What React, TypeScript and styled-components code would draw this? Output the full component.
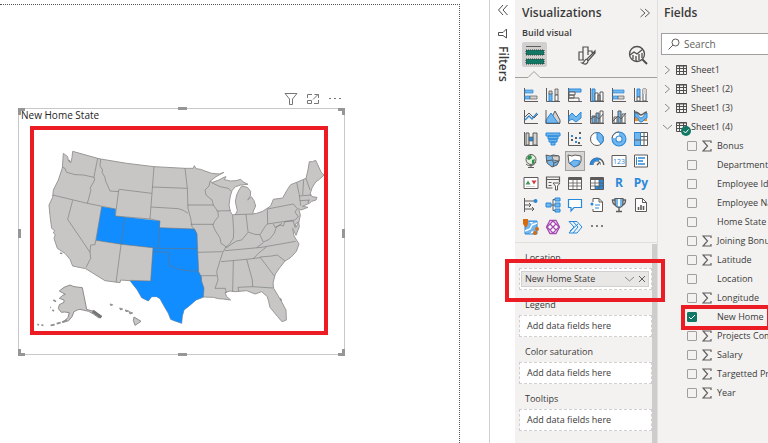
import React from "react";
import styled, { createGlobalStyle, css } from "styled-components";

const GlobalStyle = createGlobalStyle`
  * { box-sizing: border-box; }
  body { margin: 0; background: #fff; color: #3b3a39; font: 9px/14px "Open Sans", "Noto Sans", sans-serif; overflow: hidden; }
  button, input { font: inherit; color: inherit; }
  button { background: none; border: 0; padding: 0; display: inline-flex; align-items: center; justify-content: center; }
  svg { display: block; flex: none; }
`;

const RED = "#ec1c24";

const Shell = styled.div`
  display: grid;
  grid-template-columns: minmax(0, 1fr) 26px 143px 110px;
  min-height: 100vh;
`;

/* ---------- report canvas ---------- */

const Canvas = styled.main`
  padding: 4px 29px 0 0;
  display: flex;
`;

const ReportPage = styled.div`
  flex: 1;
  min-width: 0;
  border-top: 1px dotted #555;
  border-right: 1px dotted #555;
  padding: 87px 114px 0 18px;
`;

const VisualActions = styled.div`
  display: flex;
  justify-content: flex-end;
  align-items: flex-start;
  gap: 8px;
  height: 16px;
  padding-right: 3px;
`;

const VisualFrame = styled.section`
  position: relative;
  border: 1px solid #c8c8c8;
  padding: 0 16px 19px 11px;
`;

const Handle = styled.span<{ $at: "tl" | "t" | "tr" | "l" | "r" | "bl" | "b" | "br" }>`
  position: absolute;
  border: 0 solid #969696;
  ${({ $at }) =>
    ({
      tl: css`top: -1px; left: -1px; width: 7px; height: 7px; border-width: 3px 0 0 3px;`,
      tr: css`top: -1px; right: -1px; width: 7px; height: 7px; border-width: 3px 3px 0 0;`,
      bl: css`bottom: -2px; left: -1px; width: 7px; height: 7px; border-width: 0 0 3px 3px;`,
      br: css`bottom: -2px; right: -1px; width: 7px; height: 7px; border-width: 0 3px 3px 0;`,
      t: css`top: -2px; left: 49%; width: 9px; border-width: 3px 0 0;`,
      b: css`bottom: -2px; left: 49%; width: 9px; border-width: 3px 0 0;`,
      l: css`top: 49%; left: -1px; height: 9px; border-width: 0 0 0 3px;`,
      r: css`top: 49%; right: -1px; height: 9px; border-width: 0 0 0 3px;`,
    })[$at]}
`;

const VisualTitle = styled.h3`
  margin: 0 0 5px -9px;
  font-size: 10px;
  line-height: 12px;
  font-weight: 400;
  color: #252423;
`;

const MapHighlight = styled.div`
  border: 4px solid ${RED};
  svg { width: 100%; height: auto; }
`;

/* ---------- collapsed filters ---------- */

const FiltersPane = styled.aside`
  border-left: 1px solid #d0d0d0;
  display: flex;
  flex-direction: column;
  align-items: center;
  padding: 4px 0 0;
  gap: 12px;
`;

const FiltersLabel = styled.h2`
  margin: -6px 0 0;
  writing-mode: vertical-rl;
  font-size: 12px;
  line-height: 16px;
  font-weight: 600;
`;

/* ---------- visualizations ---------- */

const VizPane = styled.section`
  background: #f3f2f1;
  border-right: 1px solid #e1dfdd;
  display: flex;
  flex-direction: column;
  min-width: 0;
`;

const PaneHeader = styled.header`
  display: flex;
  justify-content: space-between;
  align-items: center;
  padding: 3px 6px 0 7px;
`;

const PaneTitle = styled.h2`
  margin: 0;
  font-size: 12px;
  line-height: 20px;
  font-weight: 600;
`;

const SubTitle = styled.h3`
  margin: 3px 7px 2px;
  font-size: 9px;
  line-height: 14px;
  font-weight: 600;
`;

const ModeTabs = styled.div`
  display: flex;
  justify-content: space-between;
  padding: 0 7px;
`;

const ModeTab = styled.button<{ $active?: boolean }>`
  width: 25px;
  height: 25px;
  border-radius: 2px;
  background: ${({ $active }) => ($active ? "#d2d0ce" : "transparent")};
`;

const TabRule = styled.svg`
  width: 100%;
  height: 12px;
`;

const VisualGrid = styled.div`
  display: grid;
  grid-template-columns: repeat(6, 22px);
  grid-auto-rows: 22px;
  padding: 5px 0 4px 5px;
  border-bottom: 1px solid #e1dfdd;
`;

const VisualButton = styled.button<{ $active?: boolean }>`
  width: 20px;
  height: 20px;
  margin: 1px;
  ${({ $active }) => $active && css`background: #d8d6d4; border: 1px solid #a19f9d;`}
`;

const Wells = styled.div`
  flex: 1;
  display: flex;
  flex-direction: column;
  gap: 8px;
  padding: 7px 0 0 4px;
  margin-top: 1px;
  border-right: 5px solid #cfcdcb;
`;

const Well = styled.div`
  position: relative;
`;

const WellLabel = styled.h4`
  margin: 0 6px 3px;
  font-size: 9px;
  line-height: 14px;
  font-weight: 400;
`;

const DropZone = styled.div<{ $filled?: boolean }>`
  height: 22px;
  border: 1px dashed #d2d0ce;
  background: #fff;
  display: flex;
  align-items: center;
  padding: ${({ $filled }) => ($filled ? "2px 2px 2px 1px" : "0 7px")};
  white-space: nowrap;
`;

const Chip = styled.div`
  flex: 1;
  height: 16px;
  display: flex;
  align-items: center;
  gap: 4px;
  padding: 0 2px 0 3px;
  background: #e9e7e5;
  border: 1px solid #d2d0ce;
  span { flex: 1; }
`;

const WellHighlight = styled.div`
  position: absolute;
  inset: 8px -13px -12px -14px;
  border: 4px solid ${RED};
  pointer-events: none;
  z-index: 2;
`;

/* ---------- fields ---------- */

const FieldsPane = styled.section`
  background: #f3f2f1;
  padding: 3px 0 0 3px;
  min-width: 0;
  overflow: hidden;
`;

const FieldsTitle = styled(PaneTitle)`
  margin: 0 0 10px 3px;
`;

const SearchBox = styled.label`
  display: flex;
  align-items: center;
  gap: 4px;
  height: 22px;
  margin-right: -3px;
  padding-left: 6px;
  background: #fff;
  border: 1px solid #a19f9d;
  input {
    width: 100%;
    min-width: 0;
    border: 0;
    outline: 0;
    padding: 0;
    background: none;
    font-size: 10px;
    &::placeholder { color: #605e5c; opacity: 1; }
  }
`;

const Tree = styled.ul`
  list-style: none;
  margin: 0;
  padding: 5px 0 0;
  & & { padding: 0; }
`;

const TableRow = styled.button`
  height: 19px;
  gap: 4px;
  padding-left: 2px;
  white-space: nowrap;
`;

const TableIconBox = styled.span`
  position: relative;
`;

const Tick = styled.svg`
  position: absolute;
  left: 5px;
  top: 5px;
`;

const FieldRow = styled.li`
  position: relative;
  display: grid;
  grid-template-columns: 10px 10px max-content;
  align-items: center;
  gap: 5px;
  height: 19px;
  padding-left: 26px;
  label { grid-column: 3; white-space: nowrap; }
`;

const CheckBox = styled.input`
  appearance: none;
  width: 10px;
  height: 10px;
  margin: 0;
  border: 1px solid #a19f9d;
  border-radius: 1px;
  background: #f3f2f1;
  &:checked {
    border-color: #117865;
    background: #117865 url("data:image/svg+xml,%3Csvg xmlns='http://www.w3.org/2000/svg' viewBox='0 0 8 8'%3E%3Cpath d='M1 4l2 2 4-4' fill='none' stroke='white'/%3E%3C/svg%3E");
  }
`;

const FieldHighlight = styled.div`
  position: absolute;
  inset: -2px -3px -4px 20px;
  border: 4px solid ${RED};
  pointer-events: none;
  z-index: 1;
`;

/* ---------- drawings ---------- */

const STATE_LINES = [
  "M187 262L194 264L200 277L225 284L250 285L282 292",
  "M293 235L282 290L284 300L270 325L273 330L262 370",
  "M158 345L262 370L347 387",
  "M218 361L203 418L270 517L272 535L258 562",
  "M270 517L272 495L285 494L305 380",
  "M302 237L300 258L308 270L306 277L314 290L317 303L330 333L354 335L358 328L455 340",
  "M356 332L346 408L450 417L480 423L478 443L583 447",
  "M462 260L450 417M457 321L562 325M453 381L535 386L550 391L564 400",
  "M555 265L562 325L564 385L572 415L576 440L587 452",
  "M374 412L348 607M288 481L365 493L475 505L592 506M479 443L474 505",
  "M459 503L452 603L390 601M459 515L506 517L505 555L520 562L538 568L560 572L595 573",
  "M583 447L591 462L593 514L596 575L604 590L605 604L612 625L610 651",
  "M630 304L627 318L615 330L618 345L636 360L640 375L654 395L655 410L643 425L639 436L646 452L660 474L663 490L678 500L668 518L660 542L650 575L654 600L645 625L676 625L679 639",
  "M562 375L640 375M572 433L640 433M635 308L660 320L685 325L693 334M650 393L692 392",
  "M698 405L701 455L700 475L690 490L678 502M738 403L744 455",
  "M705 404L758 402M678 504L695 492L710 483L725 480L745 456L764 463L780 464L793 443L803 430L802 388",
  "M802 387L880 372L892 386L885 396L895 411L884 420L802 432M820 432L825 442L840 435L850 438L855 425L880 423L885 443",
  "M890 307L898 345L902 377M911 300L908 345M918 295L930 330M898 348L935 345M900 362L930 360M925 360L925 370",
  "M780 465L790 486L808 478L822 461L829 442L846 430",
  "M674 512L720 508L785 502L887 484M770 503L790 488",
  "M663 545L740 538L780 533M760 536L775 520L799 501",
  "M780 531L815 528L832 525L855 543M780 531L802 560L823 588",
  "M740 538L757 600L758 620L819 624M700 542L698 635M716 634L714 622L758 620",
  "M593 517L668 515M602 587L650 587",
];

const MAINLAND =
  "M190 220L203 230L205 242L213 248L216 232L218 214L293 235L302 237L380 250L462 260L555 265L580 265L583 257L588 266L602 268L615 273L635 280L658 282L672 277L648 290L630 304L637 307L655 301L672 292L678 290L673 299L692 303L708 302L722 298L730 306L744 313L722 315L706 320L696 332L691 348L687 375L691 395L697 404L706 404L712 392L706 365L710 345L717 330L725 318L742 322L752 334L751 348L743 360L754 350L762 362L767 378L760 393L758 402L770 400L788 394L812 378L820 358L848 354L860 332L872 314L890 307L918 295L924 270L928 245L937 245L947 241L955 258L964 278L972 285L958 298L947 306L937 322L930 342L936 350L951 352L948 360L935 364L928 370L907 379L924 382L903 390L896 386L901 405L897 425L886 432L888 442L896 425L898 440L888 466L878 445L882 468L897 492L889 514L873 532L855 543L840 562L826 582L819 609L821 625L842 660L858 690L859 720L846 725L833 710L810 682L806 665L802 650L785 635L765 642L740 632L706 635L690 633L675 638L680 650L692 660L670 657L655 656L640 652L612 651L588 660L572 674L552 690L547 708L545 730L525 723L512 718L505 700L492 678L480 656L470 650L455 650L445 663L425 653L412 630L390 602L362 600L360 608L315 602L257 566L218 558L210 538L195 520L172 505L162 475L166 464L160 459L164 452L155 445L150 407L147 375L158 352L160 330L175 300L187 264Z";

const BLUE =
  "M305 380L347 387L346 408L480 423L479 443L583 447L591 460L593 514L596 575L604 590L605 604L612 625L610 651L588 660L572 674L552 690L547 708L545 730L525 723L512 718L505 700L492 678L480 656L470 650L455 650L445 663L425 653L412 630L390 602L452 603L459 503L365 493L288 481Z";

const UsMap = () => (
  <svg viewBox="102 150 870 603" role="img" aria-label="Filled map of New Home State">
    <path d={MAINLAND} fill="#c8c6c4" stroke="#9b9997" strokeWidth="3" strokeLinejoin="round" />
    <path d={BLUE} fill="#118dff" />
    <g fill="none" stroke="#6f7376" strokeOpacity=".7" strokeWidth="2.5" strokeLinejoin="round">
      {STATE_LINES.map((d) => (
        <path key={d} d={d} />
      ))}
    </g>
    <g fill="#c8c6c4" stroke="#8f8d8b" strokeWidth="3" strokeLinejoin="round">
      <path d="M178 633L192 622L210 615L222 620L247 623L260 688L270 691L282 694L304 710L297 714L280 702L266 694L240 688L232 690L222 695L216 710L206 722L190 727L204 712L208 698L194 696L184 697L175 686L178 674L192 667L192 660L178 655L188 646L196 643Z" />
      <path d="M112 733L117 735M124 735L130 736M152 736L164 734M170 731L182 728M186 727L200 720M160 660L168 665M151 682L153 683M157 690L162 693" strokeWidth="5" />
      <path d="M402 711L423 724L405 736L400 721ZM330 672L338 674L334 678ZM359 684L368 687L362 690ZM376 690L386 693L378 695ZM387 695L398 699L390 702Z" />
      <path d="M278 693L304 712" stroke="#777573" strokeWidth="9" />
      <path d="M180 519L187 521M206 240L211 246M840 655L845 662" strokeWidth="4" />
    </g>
  </svg>
);

const K = "#5c5b5a";
const B = "#2b88d8";
const L = "#71b7ee";
const G = "#d5d3d1";

const axis = <path d="M1.500 1V14.500H15" fill="none" stroke={K} />;

const ICONS: [string, React.ReactNode][] = [
  ["Stacked bar chart", <>{axis}<path d="M2 3h8v3H2zM2 9h5v3H2z" fill={L} stroke={B} strokeWidth=".7" /><path d="M7 9h7v3H7z" fill={G} stroke={K} strokeWidth=".7" /></>],
  ["Stacked column chart", <>{axis}<path d="M4 6h3v8H4z" fill={L} stroke={B} /><path d="M4 4h3v3H4zM10 2h3v6h-3z" fill={G} stroke={K} strokeWidth=".8" /><path d="M10 8h3v6h-3z" fill="#fff" stroke={K} /></>],
  ["Clustered bar chart", <>{axis}<path d="M2 2h12v3H2z" fill={L} stroke={B} /><path d="M2 5h6v3H2zM2 8h5v3H2zM2 11h10v3" fill="#fff" stroke={K} /></>],
  ["Clustered column chart", <>{axis}<path d="M3 2h3v12H3z" fill={L} stroke={B} /><path d="M6 6h3v8H6zM9 8h2v6H9zM11 5h3v9h-3z" fill="#fff" stroke={K} /></>],
  ["100% stacked bar chart", <>{axis}<path d="M2 3h11v3H2zM2 9h5v3H2z" fill={L} stroke={B} strokeWidth=".7" /><path d="M7 9h6v3H7z" fill={G} stroke={K} strokeWidth=".7" /></>],
  ["100% stacked column chart", <>{axis}<path d="M4 2h3v8H4z" fill={L} stroke={B} /><path d="M4 10h3v4H4zM10 2h3v12h-3z" fill="#fff" stroke={K} /><path d="M10 2h3v5h-3z" fill={G} /></>],
  ["Line chart", <>{axis}<path d="M2 11L6 7l3 3 5-6" fill="none" stroke={B} strokeWidth="1.300" /><path d="M2 8l4-4 5 5 4-4" fill="none" stroke={K} /></>],
  ["Area chart", <><path d="M4 14l6-12 5 9v3z" fill={G} stroke={K} /><path d="M1 14V11L6 4l7 10z" fill={L} stroke={B} /><path d="M1 1v13.500h14" fill="none" stroke={K} /></>],
  ["Stacked area chart", <>{axis}<path d="M2 7l3-3 4 4 5-5v6l-5 4-4-3-3 2z" fill={L} stroke={B} /></>],
  ["Line and stacked column chart", <>{axis}<path d="M3 7h3v7H3zM7 4h3v10H7z" fill={L} stroke={K} /><path d="M11 2h3v12h-3z" fill="#fff" stroke={K} /><path d="M2 10l4-3 4 3 4-5" fill="none" stroke={K} /></>],
  ["Line and clustered column chart", <>{axis}<path d="M3 8h3v6H3zM11 5h3v9h-3z" fill="#fff" stroke={K} /><path d="M7 2h3v12H7z" fill={L} stroke={K} /><path d="M2 12l5-5 3 3 5-6" fill="none" stroke={K} /></>],
  ["Ribbon chart", <>{axis}<path d="M2 8c4 0 5 5 12 1v3H2z" fill="#e8912d" /><path d="M2 4c4 0 3 5 6 5s3-5 6-5v5c-3 0-3 4-6 4S6 8 2 8z" fill={L} stroke={B} /><path d="M2 3c4 0 4 3 6 3s3-3 6-3" fill="none" stroke={K} strokeWidth="1.500" /></>],
  ["Waterfall chart", <>{axis}<path d="M3 2h3v12H3zM10 2h4v12h-4z" fill={G} stroke={K} /><path d="M6 6h4v4H6z" fill={B} stroke={K} strokeWidth=".6" /></>],
  ["Funnel", <path d="M1 2h14v3H1zM3 5h10v3H3zM4 8h8v3H4zM6 11h4v3H6z" fill={L} stroke={B} />],
  ["Scatter chart", <>{axis}<path d="M12 1h2v2h-2zM4 8h2v2H4zM8 6h2v2H8zM11 11h2v2h-2z" fill={K} /><path d="M4 4h2v2H4zM8 10h2v2H8zM12 6h2v2h-2z" fill={B} /></>],
  ["Pie chart", <><circle cx="8" cy="8" r="6.500" fill="#fff" stroke={K} /><path d="M8 1.500A6.500 6.500 0 0 1 12 13L8 8z" fill={L} stroke={B} /></>],
  ["Donut chart", <><circle cx="8" cy="8" r="5" fill="none" stroke={B} strokeWidth="5" /><circle cx="8" cy="8" r="5" fill="none" stroke={L} strokeWidth="3" /><path d="M8 3A5 5 0 0 0 3 7" fill="none" stroke="#fff" strokeWidth="3" /><path d="M8 1A7 7 0 0 0 1 7" fill="none" stroke={K} /></>],
  ["Treemap", <><path d="M1.500 1.500h13v13h-13z" fill="#fff" stroke={K} /><path d="M1.500 1.500h6v13h-6z" fill={L} stroke={B} /><path d="M1.500 9h13M8 5.500h6.500M11 2v7M11 9v5" stroke={K} fill="none" /></>],
  ["Map", <><circle cx="8" cy="6.500" r="5" fill="#dff0df" stroke={K} /><path d="M5 3l3-1 1 3-3 2-2-1zM9 7l3-1-1 4-2 1z" fill="#2f8f46" /><path d="M3 11c3 3 8 2 10-2M8 12v2M5 14.500h6" fill="none" stroke={K} /></>],
  ["Filled map", <><path d="M1 2l4 1 3-1 6 1v5l-2 4-5 2-5-4z" fill={L} stroke={K} /><path d="M7 3l7 0v5L8 7z" fill={G} stroke={K} strokeWidth=".8" /><path d="M1 8l6-1 2 3-1 4M9 10l5-2" fill="none" stroke={K} /></>],
  ["Shape map", <><path d="M1 2l4 1 3-1 6 1v5l-2 4-5 2-5-4z" fill="#fff" stroke={K} /><path d="M7 7l6 1-2 4-4 2-4-4z" fill={L} stroke={B} /></>],
  ["Gauge", <><path d="M2.500 12a5.500 5.500 0 0 1 11 0" fill="none" stroke={K} strokeWidth="4" /><path d="M3 12a5 5 0 0 1 10 0" fill="none" stroke="#fff" strokeWidth="2" /><path d="M2.500 12a5.500 5.500 0 0 1 8-5" fill="none" stroke={B} strokeWidth="3" /><path d="M8 12l3-3" stroke={K} strokeWidth="1.500" /></>],
  ["Card", <><path d="M1 2.500h14v11H1z" fill="#fff" stroke={K} /><text x="8" y="11" fontSize="7" textAnchor="middle" fill={B}>123</text></>],
  ["Multi-row card", <><path d="M1.500 2h13v12h-13z" fill="#fff" stroke={K} /><path d="M5 5h7M5 8h5M5 11h7" stroke={B} strokeWidth="1.600" /><path d="M3.500 4v8" stroke={B} /></>],
  ["KPI", <><path d="M1 2.500h14v11H1z" fill="#fff" stroke={K} /><path d="M2.500 9.500l2.500-4 2.500 4z" fill="#3b9a55" /><path d="M8.500 5.500h5l-2.500 4z" fill="#d83b3b" /><path d="M3 11.500h9" stroke={G} /></>],
  ["Slicer", <><path d="M1.500 13V2h13v5M1.500 4.500h13M3.500 7.500h3M3.500 10.500h3M1.500 13h6" fill="none" stroke={K} strokeWidth="1.200" /><path d="M8 8h7l-2.500 3v4h-2v-4z" fill="#fff" stroke={K} /></>],
  ["Table", <><path d="M1.500 2.500h13v12h-13z" fill="#fff" stroke={K} /><path d="M1.500 4h13" stroke={K} strokeWidth="2" /><path d="M2 8h12M2 11h12M6 4v10M10 4v10" stroke={K} strokeWidth=".8" /></>],
  ["Matrix", <><path d="M1.500 2.500h13v12h-13z" fill="#fff" stroke={K} /><path d="M10 5h4v9H6v-3h4z" fill={B} /><path d="M1.500 4h13" stroke={K} strokeWidth="2" /><path d="M2 8h12M2 11h12M6 4v10M10 4v10" stroke={K} strokeWidth=".8" /></>],
  ["R script visual", <text x="8" y="12" fontSize="12" fontWeight="700" textAnchor="middle" fill={B}>R</text>],
  ["Python visual", <text x="8" y="12" fontSize="12" fontWeight="700" textAnchor="middle" fill={B}>Py</text>],
  ["Key influencers", <><path d="M1.500 1v14M2 4h9M2 8h5M2 12h8" fill="none" stroke={K} /><circle cx="12.500" cy="4" r="2" fill={B} /><path d="M6 6l2 2-2 2M9 10l2 2-2 2" stroke={K} fill="none" /></>],
  ["Decomposition tree", <><path d="M6 8h4M8 8V2.500h2M8 8v5.500h2" fill="none" stroke={K} /><path d="M1 6h5v4H1zM10 1h5v3h-5zM10 6h5v4h-5zM10 12h5v3h-5z" fill={L} stroke={B} /></>],
  ["Q&A", <path d="M1.500 2.500h13v8H7l-3 3.500v-3.500H1.500z" fill="#fff" stroke={B} strokeWidth="1.200" />],
  ["Smart narrative", <><path d="M4 5V1.500h6l3.500 3.500v9.500H4V12" fill="#fff" stroke={K} /><path d="M10 1.500V5h3.500" fill="none" stroke={K} /><path d="M6 8h5M6 11h4" stroke={B} /><circle cx="3" cy="7" r="1.500" fill={B} /></>],
  ["Goals", <><path d="M4 1.500h8v5a4 4 0 0 1-8 0z" fill={L} stroke={K} strokeWidth="1.200" /><path d="M7 2v7h2V2z" fill="#fff" /><path d="M4 3H1.500c0 3 1 4.500 3 5M12 3h2.500c0 3-1 4.500-3 5M8 10.500V14M5 14.500h6" fill="none" stroke={K} strokeWidth="1.400" /></>],
  ["Paginated report", <><path d="M2.500 1.500h7l4 4v9h-11z" fill="#fff" stroke={K} /><path d="M9.500 1.500v4h4" fill="none" stroke={K} /><path d="M5.500 13v-3M8 13V8M10.500 13V9" stroke={K} strokeWidth="1.600" /></>],
  ["ArcGIS Maps", <><path d="M2 2h12v13H2z" fill={L} stroke={B} /><path d="M2 12l5-2 2-4 5-2" fill="none" stroke="#fff" strokeWidth="1.500" /><path d="M6 3l3 2 1-2M7 15l2-3 3 1" fill="#fff" /><path d="M0 0h5v5L3 9 0 5z" fill="#d76b0f" /><circle cx="14" cy="10" r="2" fill="#d76b0f" /><circle cx="12" cy="14" r="2" fill="#d76b0f" /></>],
  ["Power Apps", <g fill="#fff" stroke="#a54bb1" strokeWidth="1.300"><path d="M5 1.500h6L14.500 8 11 14.500H5L1.500 8z" /><path d="M8 2L5 5l3 3 3-3zM8 8l-3 3 3 3 3-3zM5 5L2 8l3 3 3-3zM11 5L8 8l3 3 3-3z" /></g>],
  ["Power Automate", <><path d="M2 2.500h8l5 5.500-5 6H2l5-6z" fill="#eaf4fc" stroke={B} /><path d="M6 2.500l5 5.500-5 6M3 12l8-7" fill="none" stroke={B} /></>],
  ["Get more visuals", <path d="M2 7h2M7 7h2M12 7h2" stroke={K} strokeWidth="1.500" />],
];

const Chevron = ({ open = false }: { open?: boolean }) => (
  <svg width="9" height="10" viewBox="0 0 9 10" fill="none" stroke="#8a8886">
    <path d={open ? "M0 3l4.500 4L9 3" : "M2 1l4.500 4L2 9"} />
  </svg>
);

const TableGlyph = () => (
  <svg width="11" height="11" viewBox="0 0 11 11" fill="none" stroke="#504f4e">
    <path d="M.5 1.500h10v9H.5zM0 2h11M0 4.500h11M0 7.500h11M3.500 2v8M7.500 2v8" />
  </svg>
);

const Sigma = () => (
  <svg width="10" height="12" viewBox="0 0 10 12" fill="none" stroke="#605e5c" strokeWidth="1.200">
    <path d="M9 3V1H1l4.500 5L1 11h8V9" />
  </svg>
);

const TABLES = ["Sheet1", "Sheet1 (2)", "Sheet1 (3)", "Sheet1 (4)"];

const FIELDS = [
  { name: "Bonus", sum: true },
  { name: "Department" },
  { name: "Employee Id" },
  { name: "Employee Name" },
  { name: "Home State" },
  { name: "Joining Bonus", sum: true },
  { name: "Latitude", sum: true },
  { name: "Location" },
  { name: "Longitude", sum: true },
  { name: "New Home", used: true },
  { name: "Projects Completed", sum: true },
  { name: "Salary", sum: true },
  { name: "Targetted Projects", sum: true },
  { name: "Year", sum: true },
];

const HANDLES = ["tl", "t", "tr", "l", "r", "bl", "b", "br"] as const;

export default function App() {
  return (
    <>
      <GlobalStyle />
      <Shell>
        <Canvas>
          <ReportPage>
            <VisualActions>
              <button aria-label="Filters on this visual">
                <svg width="14" height="14" viewBox="0 0 14 14" fill="none" stroke="#777">
                  <path d="M1 1.500h12L8.500 7v5.500h-3V7z" />
                </svg>
              </button>
              <button aria-label="Focus mode">
                <svg width="14" height="14" viewBox="0 0 14 14" fill="none" stroke="#777">
                  <path d="M6 2.500H1.500V6M12.500 8v3.500H8M1.500 8.500h4v3h-4zM7 7.500l5-5M8.500 2.500h4V6" />
                </svg>
              </button>
              <button aria-label="More options">
                <svg width="14" height="14" viewBox="0 0 14 14" fill="#777">
                  <path d="M1 6h2v1H1zM6 6h2v1H6zM11 6h2v1h-2z" />
                </svg>
              </button>
            </VisualActions>
            <VisualFrame>
              <VisualTitle>New Home State</VisualTitle>
              <MapHighlight>
                <UsMap />
              </MapHighlight>
              {HANDLES.map((at) => (
                <Handle key={at} $at={at} />
              ))}
            </VisualFrame>
          </ReportPage>
        </Canvas>

        <FiltersPane>
          <button aria-label="Expand filters">
            <svg width="12" height="12" viewBox="0 0 12 12" fill="none" stroke="#504f4e">
              <path d="M6 1L1.500 6 6 11M10.500 1L6 6l4.500 5" />
            </svg>
          </button>
          <svg width="11" height="12" viewBox="0 0 11 12" fill="none" stroke="#504f4e">
            <path d="M9.500 1v9L6 7.500H1.500v-3H6z" />
          </svg>
          <FiltersLabel>Filters</FiltersLabel>
        </FiltersPane>

        <VizPane>
          <PaneHeader>
            <PaneTitle>Visualizations</PaneTitle>
            <button aria-label="Collapse visualizations">
              <svg width="12" height="12" viewBox="0 0 12 12" fill="none" stroke="#605e5c">
                <path d="M1.500 2L6 6l-4.500 4M6 2l4.500 4L6 10" />
              </svg>
            </button>
          </PaneHeader>
          <SubTitle>Build visual</SubTitle>
          <ModeTabs>
            <ModeTab $active aria-label="Build visual">
              <svg width="20" height="20" viewBox="0 0 20 20">
                <path d="M1 1.500h15" stroke="#605e5c" />
                <path d="M1 5h18v5H1zM1 14h18v5H1z" fill="#117865" stroke="#3b3a39" strokeDasharray="1 1" />
              </svg>
            </ModeTab>
            <ModeTab aria-label="Format visual">
              <svg width="19" height="20" viewBox="0 0 19 20" fill="none" stroke="#504f4e" strokeWidth="1.200">
                <path d="M7 15H2V7h4v8M6 9V2h5v8M11 6h4v2M18 6l-8 8 1 2 7-8zM10 14c-3 0-2 4-5 4 3 2 6 1 6-2" />
              </svg>
            </ModeTab>
            <ModeTab aria-label="Analytics">
              <svg width="20" height="20" viewBox="0 0 20 20" fill="none" stroke="#504f4e" strokeWidth="1.300">
                <circle cx="9" cy="9" r="7.500" />
                <path d="M2 10l4-3 3 2 6-5M5 10v4M8 11v5M11 9v6M14 8v5" />
                <path d="M14.500 14.500l4.500 4.500" strokeWidth="2" />
              </svg>
            </ModeTab>
          </ModeTabs>
          <TabRule viewBox="0 0 143 12" preserveAspectRatio="xMinYMid slice" fill="none" stroke="#a19f9d">
            <path d="M0 10.500h13l6-6 6 6h118" />
          </TabRule>
          <VisualGrid>
            {ICONS.map(([label, art]) => (
              <VisualButton key={label} aria-label={label} $active={label === "Shape map"}>
                <svg width="16" height="16" viewBox="0 0 16 16">{art}</svg>
              </VisualButton>
            ))}
          </VisualGrid>
          <Wells>
            <Well>
              <WellLabel>Location</WellLabel>
              <DropZone $filled>
                <Chip>
                  <span>New Home State</span>
                  <button aria-label="Field options">
                    <Chevron open />
                  </button>
                  <button aria-label="Remove field">
                    <svg width="8" height="8" viewBox="0 0 8 8" stroke="#605e5c">
                      <path d="M1 1l6 6M7 1L1 7" />
                    </svg>
                  </button>
                </Chip>
              </DropZone>
              <WellHighlight />
            </Well>
            {["Legend", "Color saturation", "Tooltips"].map((name) => (
              <Well key={name}>
                <WellLabel>{name}</WellLabel>
                <DropZone>Add data fields here</DropZone>
              </Well>
            ))}
          </Wells>
        </VizPane>

        <FieldsPane>
          <FieldsTitle>Fields</FieldsTitle>
          <SearchBox>
            <svg width="12" height="12" viewBox="0 0 12 12" fill="none" stroke="#605e5c">
              <circle cx="7.500" cy="4.500" r="3.500" />
              <path d="M5 7L.5 11.500" />
            </svg>
            <input placeholder="Search" aria-label="Search fields" />
          </SearchBox>
          <Tree>
            {TABLES.map((name, i) => {
              const open = i === TABLES.length - 1;
              return (
                <li key={name}>
                  <TableRow aria-expanded={open}>
                    <Chevron open={open} />
                    <TableIconBox>
                      <TableGlyph />
                      {open && (
                        <Tick width="10" height="10" viewBox="0 0 10 10">
                          <circle cx="5" cy="5" r="5" fill="#117865" />
                          <path d="M2.500 5l2 2 3-3.500" fill="none" stroke="#fff" />
                        </Tick>
                      )}
                    </TableIconBox>
                    <span>{name}</span>
                  </TableRow>
                  {open && (
                    <Tree>
                      {FIELDS.map((f, n) => (
                        <FieldRow key={f.name}>
                          <CheckBox type="checkbox" id={`field-${n}`} defaultChecked={f.used} />
                          {f.sum && <Sigma />}
                          <label htmlFor={`field-${n}`}>{f.name}</label>
                          {f.used && <FieldHighlight />}
                        </FieldRow>
                      ))}
                    </Tree>
                  )}
                </li>
              );
            })}
          </Tree>
        </FieldsPane>
      </Shell>
    </>
  );
}
